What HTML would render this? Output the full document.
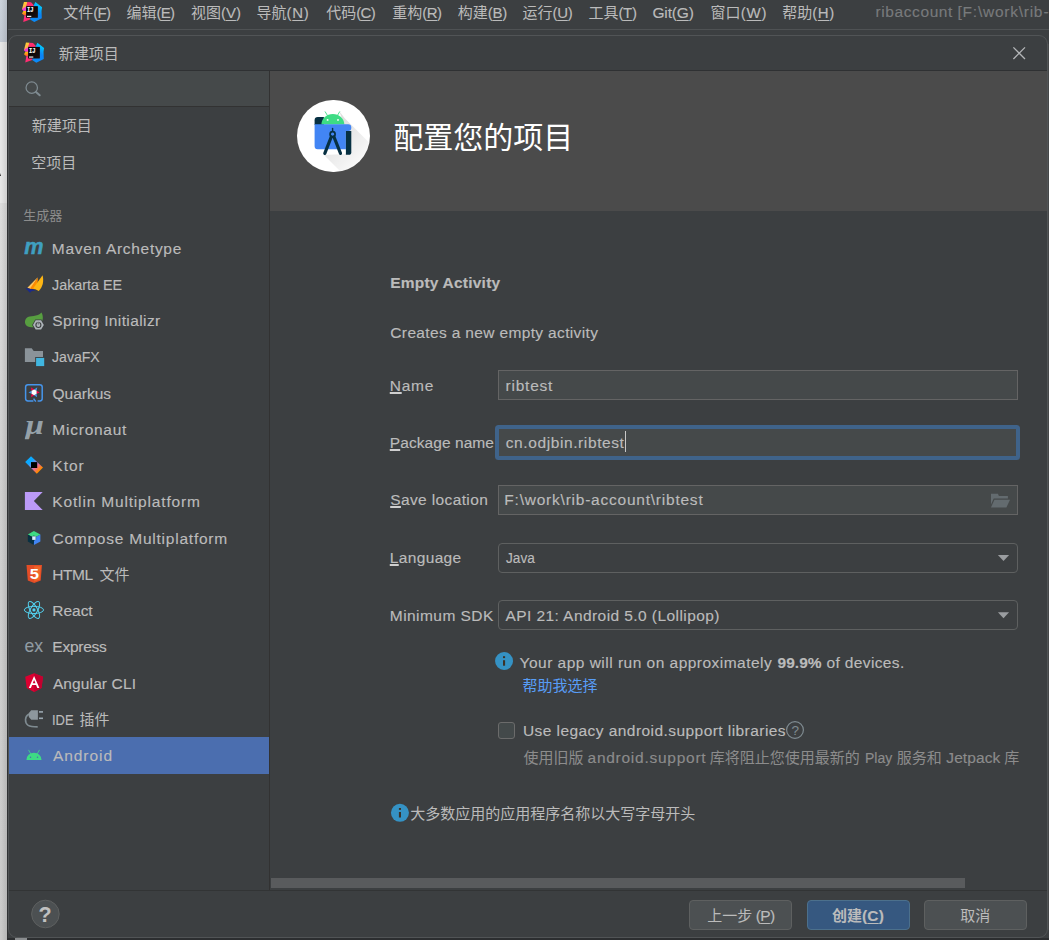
<!DOCTYPE html>
<html lang="zh-CN">
<head>
<meta charset="utf-8">
<title>新建项目</title>
<style>
*{box-sizing:border-box;margin:0;padding:0}
html,body{width:1049px;height:940px;overflow:hidden;background:#2b2b2b}
body{position:relative;font-family:"Liberation Sans","Noto Sans CJK SC",sans-serif;font-size:16px;color:#bbbbbb}
.abs{position:absolute}
svg{position:absolute;overflow:visible}
.t{position:absolute;white-space:nowrap;line-height:20px;height:20px;font-size:15.5px;color:#bbbbbb;-webkit-text-stroke:0.15px}
.c{font-size:15px;letter-spacing:0;-webkit-text-stroke:0}
u{text-decoration:underline;text-underline-offset:1.5px;text-decoration-thickness:1px}
.f u{text-underline-offset:0.5px;text-decoration-thickness:2px;text-decoration-color:#cfcfcf}
/* desktop strip on the left */
#deskTop{left:0;top:0;width:8px;height:42px;background:linear-gradient(#cbd2db,#c3cad4)}
#deskBot{left:0;top:41.5px;width:8px;height:162px;background:#e6e6e6}
#deskBot2{left:0;top:203px;width:8px;height:737px;background:linear-gradient(#dcdcdc,#cfcfcf 40%,#cacaca)}
#deskShadow{left:1px;top:0;width:6px;height:940px;background:linear-gradient(90deg,rgba(0,0,0,0),rgba(0,0,0,.10))}
#mainEdge{left:7px;top:0;width:1.2px;height:940px;background:#303234}
#below{left:7px;top:937.5px;width:1042px;height:3px;background:#2c2e30}
#belowBit{left:15.4px;top:938.2px;width:11.5px;height:2px;background:#8a8d8f}
/* main IDE window */
#main{left:7px;top:0;width:1042px;height:940px;background:#3c3f41}
#menuLine{left:7px;top:29px;width:1042px;height:1px;background:#4f5254}
/* dialog */
#dlg{left:8px;top:35px;width:1040px;height:903px;background:#3c3f41;border-radius:9px;border:1px solid #515456;overflow:hidden}
#dlgTitleLine{left:9px;top:70px;width:1038px;height:1px;background:#2f3133}
#search{left:9px;top:71px;width:260px;height:35px;background:#45494a}
#searchLine{left:9px;top:106px;width:260px;height:1px;background:#323232}
#split{left:269px;top:71px;width:1px;height:819px;background:#323232}
#hdr{left:270px;top:71px;width:777px;height:140px;background:#4b4b4b}
#sel{left:9px;top:737px;width:260px;height:37px;background:#4b6eaf}
.inp{left:498px;width:520px;height:30px;background:#45494a;border:1px solid #646464}
.combo{left:498px;width:520px;height:30px;background:#3c3f41;border:1px solid #5e6060;border-radius:4px}
#hscroll{left:271px;top:878px;width:694px;height:10px;background:#595b5d}
#botLine{left:9px;top:890px;width:1038px;height:1px;background:#323435}
.btn{top:900px;width:103px;height:30px;border-radius:4px;background:#4c5052;border:1px solid #5e6060}
</style>
</head>
<body>
<div class="abs" id="deskTop"></div>
<div class="abs" id="deskBot"></div>
<div class="abs" id="deskBot2"></div>
<div class="abs" style="left:0;top:172.5px;width:0;height:0;border-left:1.8px solid transparent;border-right:1.8px solid transparent;border-bottom:3px solid #222;margin-left:-0.6px"></div>
<div class="abs" id="deskShadow"></div>
<div class="abs" id="main"></div>
<div class="abs" id="menuLine"></div>
<div class="abs" id="mainEdge"></div>
<div class="abs" id="below"></div>
<div class="abs" id="belowBit"></div>

<!-- DIALOG FRAME -->
<div class="abs" id="dlg"></div>
<div class="abs" id="dlgTitleLine"></div>
<div class="abs" id="search"></div>
<div class="abs" id="searchLine"></div>
<div class="abs" id="split"></div>
<div class="abs" id="hdr"></div>
<div class="abs" id="sel"></div>

<!-- HEADER ICON -->
<div class="abs" style="left:297px;top:99.5px;width:72.6px;height:72.6px;border-radius:50%;background:#fff"></div>

<!-- FORM CONTROLS -->
<div class="abs inp" style="top:370px"></div>
<div class="abs" style="left:495.2px;top:425px;width:524.8px;height:35px;background:#3f638a;border-radius:3.5px"></div>
<div class="abs inp" style="top:429px;left:499px;width:517.2px;height:27px;border:none"></div>
<div class="abs" style="left:625.2px;top:431px;width:1.3px;height:21px;background:#c8c8c8"></div>
<div class="abs inp" style="top:485px"></div>
<div class="abs combo" style="top:543px"></div>
<div class="abs combo" style="top:600px"></div>
<div class="abs" style="left:497.6px;top:721.8px;width:17.7px;height:17px;border:1px solid #6b6b6b;border-radius:3px;background:#43494a"></div>

<div class="abs" id="hscroll"></div>
<div class="abs" id="botLine"></div>

<!-- BUTTONS -->
<div class="abs btn" style="left:689px"></div>
<div class="abs btn" style="left:806.6px;background:#365880;border-color:#4c708c"></div>
<div class="abs btn" style="left:924px"></div>

<div class="abs" style="left:1047.7px;top:44px;width:1.3px;height:886px;background:#464849"></div>
<!-- ICONS -->
<svg width="1049" height="940" viewBox="0 0 1049 940" style="left:0;top:0">
<defs>
  <linearGradient id="ijA" x1="0.3" y1="0" x2="0.6" y2="1"><stop offset="0" stop-color="#ffd22e"/><stop offset="0.6" stop-color="#ffb347"/><stop offset="1" stop-color="#f86ab0"/></linearGradient>
  <linearGradient id="ijD" x1="0" y1="0" x2="0.2" y2="1"><stop offset="0" stop-color="#f6d600"/><stop offset="0.5" stop-color="#ff9a1a"/><stop offset="1" stop-color="#ff5a2a"/></linearGradient>
  <linearGradient id="ijB" x1="0.2" y1="1" x2="0.7" y2="0"><stop offset="0" stop-color="#0a8cf8"/><stop offset="0.55" stop-color="#0b84f6"/><stop offset="1" stop-color="#00d8ff"/></linearGradient>
  <linearGradient id="ijC" x1="0" y1="0" x2="1" y2="1"><stop offset="0" stop-color="#ff318c"/><stop offset="1" stop-color="#fe2857"/></linearGradient>
  <linearGradient id="ijK" x1="0" y1="0" x2="1" y2="1"><stop offset="0" stop-color="#000"/><stop offset="1" stop-color="#1a1012"/></linearGradient>
  <g id="ij">
    <polygon points="1.95,0 5.5,0.1 4.4,6.2 -0.1,7.7" fill="url(#ijA)"/>
    <polygon points="5.4,0.1 9,0.3 11.9,3.4 11.7,4.6 4.2,4.6 4.5,3" fill="#ff2d6f"/>
    <polygon points="-0.1,7.65 2,6.2 4.3,4.6 4.3,9.3 1.5,9.2" fill="#f23bd0"/>
    <polygon points="1.5,9.2 4.3,9.2 4.3,13.7 2.3,13.7 0,11.65" fill="url(#ijD)"/>
    <polygon points="2.35,13.6 4.3,13.6 4.3,15.7 8.6,15.7 8.2,17.5 1.25,20" fill="url(#ijC)"/>
    <polygon points="13.4,0.15 20.1,5.4 19.5,9.2 19.8,16.4 12.3,20.2 8.15,17.5 8.5,15.6 15.6,15.6 15.6,4.5 11.6,4.5 11.8,3.35" fill="url(#ijB)"/>
    <rect x="4.15" y="4.3" width="11.65" height="11.5" fill="url(#ijK)"/>
    <text x="4.9" y="10.15" font-family="'Liberation Mono','DejaVu Sans Mono',monospace" font-weight="bold" font-size="8" fill="#fff" stroke="#fff" stroke-width="0.2" textLength="6.5" lengthAdjust="spacingAndGlyphs">IJ</text>
    <rect x="5" y="13.9" width="4.3" height="1.1" fill="#fff"/>
  </g>
  <linearGradient id="ktor" x1="0" y1="0" x2="1" y2="1"><stop offset="0.3" stop-color="#0aa9ff"/><stop offset="0.5" stop-color="#9a80e0"/><stop offset="0.62" stop-color="#ee6a8f"/><stop offset="0.8" stop-color="#ff8a00"/></linearGradient>
  <linearGradient id="shadowG" gradientUnits="userSpaceOnUse" x1="330" y1="130" x2="368" y2="168"><stop offset="0" stop-color="#000" stop-opacity="0.13"/><stop offset="1" stop-color="#000" stop-opacity="0.0"/></linearGradient>
  <clipPath id="circ"><circle cx="333.3" cy="135.8" r="36.3"/></clipPath>
  <g id="info">
    <circle cx="0" cy="0" r="9" fill="#3592c4"/>
    <rect x="-1.05" y="-4.8" width="2.1" height="1.9" fill="#3c3228"/>
    <rect x="-1.05" y="-0.8" width="2.1" height="5.5" fill="#3c3228"/>
  </g>
</defs>

<!-- IntelliJ logos -->
<use href="#ij" x="22" y="1.9"/>
<use href="#ij" x="24" y="42.6"/>

<!-- close X -->
<path d="M1013.4 47.4 L1025 59 M1025 47.4 L1013.4 59" stroke="#b4b6b8" stroke-width="1.3" fill="none"/>

<!-- search -->
<circle cx="31.75" cy="87.65" r="5.7" fill="none" stroke="#7f8b91" stroke-width="1.25"/>
<path d="M36 91.9 L39.7 95.3" stroke="#7f8b91" stroke-width="2" stroke-linecap="round"/>

<!-- Android Studio big icon -->
<g clip-path="url(#circ)">
  <polygon points="339.5,111.5 344.5,118 351.5,125 412,185.5 384,215 324,155 346,154 346,131" fill="url(#shadowG)"/>
</g>
<path d="M314.6 120.3 a3.3 3.3 0 0 1 3.3 -3.3 h6 v8 h-9.3 z" fill="#073042"/>
<path d="M321.4 124.6 a11.45 10.6 0 0 1 22.9 0 z" fill="#3ddc84"/>
<path d="M325.2 111.8 L327.4 115.4 M339.6 111.8 L337.6 115.2" stroke="#3ddc84" stroke-width="0.9" stroke-linecap="round"/>
<circle cx="327.6" cy="119.9" r="0.95" fill="#fff"/><circle cx="338" cy="119.9" r="0.95" fill="#fff"/>
<path d="M314.6 124.3 h33.6 a3.1 3.1 0 0 1 3.1 3.1 v0.6 a3 3 0 0 1 -3 3 h-2.4 v18.2 h-28.3 a3 3 0 0 1 -3 -3 z" fill="#4285f4"/>
<path d="M345.9 131 h5.4 v21.2 a2.6 2.6 0 0 1 -2.6 2.6 h-2.8 z" fill="#073042"/>
<g stroke="#073042" fill="none" stroke-linecap="round">
  <path d="M332.6 128.4 V131" stroke-width="1.4"/>
  <circle cx="332.6" cy="134.2" r="2.5" stroke-width="1.7"/>
  <path d="M331.2 137 L324.8 153.4 M334 137 L340.5 153.4" stroke-width="3.2"/>
</g>

<!-- list icons -->
<!-- maven -->
<text x="24.3" y="254" font-family="'Liberation Sans',sans-serif" font-style="italic" font-weight="bold" font-size="22.3" fill="#3f9fc0" stroke="#3f9fc0" stroke-width="0.5" textLength="19.2" lengthAdjust="spacingAndGlyphs">m</text>
<!-- jakarta -->
<path d="M37.7 277.2 L27.4 287.8 L31 289 z" fill="#fdc45f"/>
<path d="M37.9 277.4 C38 282 36.8 286 35.4 289.4 L30 288.6 z" fill="#ff8c00"/>
<path d="M42.6 275.2 C44 281.5 42.8 286.8 38.8 290.9 L33.2 288.2 z" fill="#fdb614"/>
<path d="M25.2 287.9 L36.6 289.9 L31.4 291.2 L30 292.8 z" fill="#1b2a8a"/>
<!-- spring initializr -->
<path d="M41.5 312.6 C43.6 316.5 43.4 321.5 40 324.5 C37 327.5 31 328 27.8 326.6 C24.6 325 24 320.5 26.6 318 C29.6 315.2 37.5 317.2 41.5 312.6 z" fill="#579e40"/>
<polygon points="44.70,324.90 41.55,330.36 35.25,330.36 32.10,324.90 35.25,319.44 41.55,319.44" fill="#3c3f41"/>
<polygon points="43.80,324.90 41.10,329.58 35.70,329.58 33.00,324.90 35.70,320.22 41.10,320.22" fill="#aeb5ba"/>
<circle cx="38.4" cy="325" r="2.5" fill="none" stroke="#3c3f41" stroke-width="1.1"/>
<rect x="37.9" y="321.4" width="1" height="3.2" fill="#3c3f41" stroke="#aeb5ba" stroke-width="0.5"/>
<!-- javafx -->
<path d="M24.9 348.2 h6.8 l2 2.9 h9.3 v10.9 h-18.1 z" fill="#8a9399"/>
<rect x="35.2" y="357" width="9.9" height="9.9" fill="#3c3f41"/>
<rect x="36.1" y="357.9" width="8.1" height="8.2" fill="#40b6e0"/>
<!-- quarkus -->
<path d="M33.4 400.9 h-5.4 a2.4 2.4 0 0 1 -2.4 -2.4 v-11.4 a2.4 2.4 0 0 1 2.4 -2.4 h11.8 a2.4 2.4 0 0 1 2.4 2.4 v11.4 a2.4 2.4 0 0 1 -2.4 2.4 h-2.2 M33.6 398.6 l2.2 3" fill="none" stroke="#4695eb" stroke-width="1.5"/>
<g transform="translate(34.1 392.3)">
  <polygon points="0,-2.9 -3.2,-5 -2.5,-1.45" fill="#ff004a"/>
  <polygon points="0,-2.9 3.2,-5 2.5,-1.45" fill="#4695eb"/>
  <polygon points="2.5,-1.45 5.6,0.2 2.5,1.45" fill="#ff004a"/>
  <polygon points="2.5,1.45 3,5 0,2.9" fill="#4695eb"/>
  <polygon points="0,2.9 -3,5 -2.5,1.45" fill="#ff004a"/>
  <polygon points="-2.5,1.45 -5.6,0.2 -2.5,-1.45" fill="#4695eb"/>
  <polygon points="0,-2.9 2.5,-1.45 2.5,1.45 0,2.9 -2.5,1.45 -2.5,-1.45" fill="#fff"/>
</g>
<!-- micronaut -->
<clipPath id="muclip"><rect x="24.7" y="418" width="20" height="21.2"/></clipPath>
<g clip-path="url(#muclip)"><text x="25.6" y="434.4" font-family="'Liberation Serif','DejaVu Serif',serif" font-style="italic" font-weight="bold" font-size="28" fill="#95a1a9" stroke="#95a1a9" stroke-width="0.05" textLength="18.4" lengthAdjust="spacingAndGlyphs">μ</text></g>
<!-- ktor -->
<polygon points="31,456.3 43,467.6 36.8,473.7 25.2,462.1" fill="url(#ktor)"/>
<rect x="31" y="462.1" width="6.2" height="5.9" fill="#000"/>
<!-- kotlin -->
<polygon points="24.9,492 42.7,492 33.9,501.1 42.7,510.1 24.9,510.1" fill="#bb9af7"/>
<!-- compose -->
<polygon points="33.9,530.9 40.4,534.5 34.1,538 27.8,534.5" fill="#3ddc84"/>
<polygon points="27.8,534.5 34.1,538 33.9,545 27.8,541.4" fill="#083042"/>
<polygon points="40.4,534.5 40.4,541.4 33.9,545 34.1,538" fill="#4285f4"/>
<polygon points="33.9,535.5 36.1,536.8 36.1,539.4 33.9,540.7 31.7,539.4 31.7,536.8" fill="#083042"/>
<rect x="32.2" y="536.3" width="3.5" height="3.6" fill="#d7effe"/>
<!-- html5 -->
<polygon points="26.5,565 42,565 40.7,580.4 34.2,582.9 27.8,580.4" fill="#e44d26"/>
<polygon points="34.2,566.2 40.8,566.2 39.7,579.5 34.2,581.6" fill="#f16529"/>
<text x="29.8" y="579.4" font-family="'Liberation Sans',sans-serif" font-weight="bold" font-size="14.6" fill="#fff" stroke="#fff" stroke-width="0.05" textLength="9.2" lengthAdjust="spacingAndGlyphs">5</text>
<!-- react -->
<g transform="translate(33.95 609.95)" fill="none" stroke="#53d2f0" stroke-width="1">
  <ellipse rx="9.6" ry="3.6"/>
  <ellipse rx="9.6" ry="3.6" transform="rotate(60)"/>
  <ellipse rx="9.6" ry="3.6" transform="rotate(120)"/>
  <circle r="1.6" fill="#53d2f0" stroke="none"/>
</g>
<!-- express -->
<text x="24.4" y="652.2" font-family="'Liberation Sans',sans-serif" font-size="18.6" fill="#919ca3" stroke="#919ca3" stroke-width="0.1" textLength="18.6" lengthAdjust="spacingAndGlyphs">ex</text>
<!-- angular -->
<polygon points="34.1,673.3 43,676.7 41.5,687.9 34.1,692.1 26.7,687.9 25.2,676.7" fill="#dd0031"/>
<polygon points="34.1,673.3 43,676.7 41.5,687.9 34.1,692.1" fill="#c3002f"/>
<path d="M34.1 676 L28.8 687.9 h2.1 l1.2 -2.9 h4 l1.2 2.9 h2.1 z M34.1 680 l1.4 3.3 h-2.8 z" fill="#fff" fill-rule="evenodd"/>
<!-- ide plugin -->
<path d="M29 714 C24.6 716.5 24.4 722.8 28.2 725.4 C30.5 726.9 34 726.9 37.7 726.9" fill="none" stroke="#7f8b91" stroke-width="1.6"/>
<path d="M28.8 713 l2.4 -2.7 h6.7 v9.5 h-6.7 l-2.4 -2.7 z" fill="#8d979d"/>
<rect x="39" y="711.1" width="4" height="1.6" fill="#9aa7b0"/><rect x="39" y="717.5" width="4" height="1.6" fill="#9aa7b0"/>
<!-- android small -->
<path d="M26.4 760 a7.55 7.3 0 0 1 15.1 0 z" fill="#3ddc84"/>
<path d="M28.7 750.2 L30.6 753.6 M39.3 750.2 L37.4 753.6" stroke="#3ddc84" stroke-width="0.8" stroke-linecap="round"/>
<circle cx="30.5" cy="757.2" r="0.75" fill="#4b6eaf"/><circle cx="37.5" cy="757.2" r="0.75" fill="#4b6eaf"/>

<!-- folder icon in Save location -->
<path d="M991 493.8 h6.9 l1 2.2 h9 v2.6 h-14.2 l-2.7 6 z" fill="#636b6f"/>
<polygon points="994.4,499.8 1010,499.8 1006.4,507.6 991,507.6" fill="#636b6f"/>

<!-- combo arrows -->
<polygon points="997.9,555.1 1009.1,555.1 1003.5,561" fill="#9a9da0"/>
<polygon points="997.9,612.3 1009.1,612.3 1003.5,618.2" fill="#9a9da0"/>

<!-- info icons -->
<use href="#info" x="504.05" y="661"/>
<use href="#info" x="399.95" y="812.8"/>

<!-- small help -->
<circle cx="795" cy="730" r="8.4" fill="none" stroke="#7f8b91" stroke-width="1.2"/>
<text x="795.2" y="735" text-anchor="middle" font-family="'Liberation Sans',sans-serif" font-size="13.6" fill="#7f8b91" stroke="#7f8b91" stroke-width="0.05">?</text>

<!-- big help button -->
<circle cx="45.4" cy="914" r="13.8" fill="#4c5052" stroke="#5e6060" stroke-width="1"/>
<text x="45.1" y="921.9" text-anchor="middle" font-family="'Liberation Sans',sans-serif" font-weight="bold" font-size="21.5" fill="#c0c0c0" stroke="#c0c0c0" stroke-width="0.05">?</text>
</svg>


<!-- TEXTS -->
<span class="t" style="left:63.21px;top:3px;font-size:15px;letter-spacing:-0.72px"><span class="c">文件</span>(<u>F</u>)</span>
<span class="t" style="left:126.59px;top:3px;font-size:15px;letter-spacing:-0.81px"><span class="c">编辑</span>(<u>E</u>)</span>
<span class="t" style="left:191.01px;top:3px;font-size:15px;letter-spacing:-0.05px"><span class="c">视图</span>(<u>V</u>)</span>
<span class="t" style="left:256.60px;top:3px;font-size:15px;letter-spacing:0.64px"><span class="c">导航</span>(<u>N</u>)</span>
<span class="t" style="left:326.22px;top:3px;font-size:15px;letter-spacing:-0.70px"><span class="c">代码</span>(<u>C</u>)</span>
<span class="t" style="left:392.20px;top:3px;font-size:15px;letter-spacing:-0.53px"><span class="c">重构</span>(<u>R</u>)</span>
<span class="t" style="left:457.72px;top:3px;font-size:15px;letter-spacing:-0.31px"><span class="c">构建</span>(<u>B</u>)</span>
<span class="t" style="left:522.42px;top:3px;font-size:15px;letter-spacing:-0.23px"><span class="c">运行</span>(<u>U</u>)</span>
<span class="t" style="left:588.40px;top:3px;font-size:15px;letter-spacing:-0.33px"><span class="c">工具</span>(<u>T</u>)</span>
<span class="t" style="left:652.44px;top:3px;letter-spacing:-0.15px">Git(<u>G</u>)</span>
<span class="t" style="left:710.62px;top:3px;font-size:15px;letter-spacing:0.85px"><span class="c">窗口</span>(<u>W</u>)</span>
<span class="t" style="left:782.21px;top:3px;font-size:15px;letter-spacing:0.58px"><span class="c">帮助</span>(<u>H</u>)</span>
<span class="t" style="left:875.56px;top:2px;color:#787a7c;letter-spacing:0.59px">ribaccount</span>
<span class="t" style="left:957.57px;top:2px;color:#787a7c;letter-spacing:0.75px">[F:\work\rib</span>
<span class="t" style="left:1043.56px;top:2px;color:#787a7c">-</span>
<span class="t" style="left:58.86px;top:44px"><span class="c">新建项目</span></span>
<span class="t" style="left:31.76px;top:116px"><span class="c">新建项目</span></span>
<span class="t" style="left:31.22px;top:153px"><span class="c">空项目</span></span>
<span class="t" style="left:23.15px;top:205px;color:#8c8c8c"><span class="c" style="font-size:13px">生成器</span></span>
<span class="t" style="left:51.87px;top:239px;letter-spacing:0.69px">Maven Archetype</span>
<span class="t" style="left:52.36px;top:275px;transform:scaleX(0.925);transform-origin:0 0">Jakarta EE</span>
<span class="t" style="left:52.30px;top:311px;letter-spacing:0.39px">Spring Initializr</span>
<span class="t" style="left:52.36px;top:347px;transform:scaleX(0.909);transform-origin:0 0">JavaFX</span>
<span class="t" style="left:52.47px;top:384px">Quarkus</span>
<span class="t" style="left:52.37px;top:420px;letter-spacing:0.75px">Micronaut</span>
<span class="t" style="left:52.37px;top:456px;letter-spacing:0.96px">Ktor</span>
<span class="t" style="left:52.37px;top:492px;letter-spacing:0.83px">Kotlin Multiplatform</span>
<span class="t" style="left:52.44px;top:529px;letter-spacing:0.77px">Compose Multiplatform</span>
<span class="t" style="left:52.37px;top:565px;letter-spacing:-0.49px">HTML</span>
<span class="t" style="left:99.61px;top:565px"><span class="c">文件</span></span>
<span class="t" style="left:52.37px;top:601px;letter-spacing:-0.05px">React</span>
<span class="t" style="left:52.37px;top:637px;letter-spacing:-0.25px">Express</span>
<span class="t" style="left:52.90px;top:674px;letter-spacing:0.12px">Angular CLI</span>
<span class="t" style="left:52.47px;top:710px;transform:scaleX(0.835);transform-origin:0 0">IDE</span>
<span class="t" style="left:79.44px;top:710px"><span class="c">插件</span></span>
<span class="t" style="left:52.90px;top:746px;letter-spacing:0.96px">Android</span>
<span class="t" style="left:393.15px;top:128px;color:#ffffff"><span class="c" style="font-size:30px">配置您的项目</span></span>
<span class="t" style="left:390.20px;top:273px;font-weight:bold;letter-spacing:0.22px">Empty Activity</span>
<span class="t" style="left:390.34px;top:323px;letter-spacing:0.35px">Creates a new empty activity</span>
<span class="t f" style="left:389.77px;top:376px;letter-spacing:0.75px"><u>N</u>ame</span>
<span class="t f" style="left:389.77px;top:433px;letter-spacing:0.07px"><u>P</u>ackage name</span>
<span class="t f" style="left:390.20px;top:490px;letter-spacing:0.38px"><u>S</u>ave location</span>
<span class="t f" style="left:389.77px;top:548px;letter-spacing:0.35px"><u>L</u>anguage</span>
<span class="t" style="left:389.77px;top:606px;letter-spacing:0.45px">Minimum SDK</span>
<span class="t" style="left:505.46px;top:376px;letter-spacing:0.79px">ribtest</span>
<span class="t" style="left:505.76px;top:433px;letter-spacing:0.60px">cn.odjbin.ribtest</span>
<span class="t" style="left:504.37px;top:490px;letter-spacing:0.77px">F:\work\rib-account\ribtest</span>
<span class="t" style="left:505.97px;top:548px;transform:scaleX(0.880);transform-origin:0 0">Java</span>
<span class="t" style="left:505.40px;top:606px;letter-spacing:0.43px">API 21: Android 5.0 (Lollipop)</span>
<span class="t" style="left:519.59px;top:653px;letter-spacing:0.48px">Your app will run on approximately</span>
<span class="t" style="left:777.55px;top:653px;font-weight:bold;letter-spacing:0.03px">99.9%</span>
<span class="t" style="left:826.46px;top:653px;letter-spacing:0.37px">of devices.</span>
<span class="t" style="left:522.41px;top:676px;color:#589df6"><span class="c">帮助我选择</span></span>
<span class="t" style="left:522.91px;top:721px;letter-spacing:0.44px">Use legacy android.support libraries</span>
<span class="t" style="left:523.57px;top:748px;color:#8c8c8c"><span class="c">使用旧版</span></span>
<span class="t" style="left:587.53px;top:748px;color:#8c8c8c;letter-spacing:0.74px">android.support</span>
<span class="t" style="left:709.81px;top:748px;color:#8c8c8c"><span class="c">库将阻止您使用最新的</span></span>
<span class="t" style="left:864.69px;top:748px;color:#8c8c8c;transform:scaleX(0.903);transform-origin:0 0">Play</span>
<span class="t" style="left:896.82px;top:748px;color:#8c8c8c"><span class="c">服务和</span></span>
<span class="t" style="left:946.33px;top:748px;color:#8c8c8c;letter-spacing:0.08px">Jetpack</span>
<span class="t" style="left:1004.21px;top:748px;color:#8c8c8c"><span class="c">库</span></span>
<span class="t" style="left:410.20px;top:804px"><span class="c">大多数应用的应用程序名称以大写字母开头</span></span>
<span class="t" style="left:707.21px;top:906px;letter-spacing:-0.71px"><span class="c">上一步</span> (<u>P</u>)</span>
<span class="t" style="left:831.92px;top:906px;font-weight:bold;letter-spacing:0.24px"><span class="c">创建</span>(<u>C</u>)</span>
<span class="t" style="left:960.13px;top:906px"><span class="c">取消</span></span>
</body>
</html>
